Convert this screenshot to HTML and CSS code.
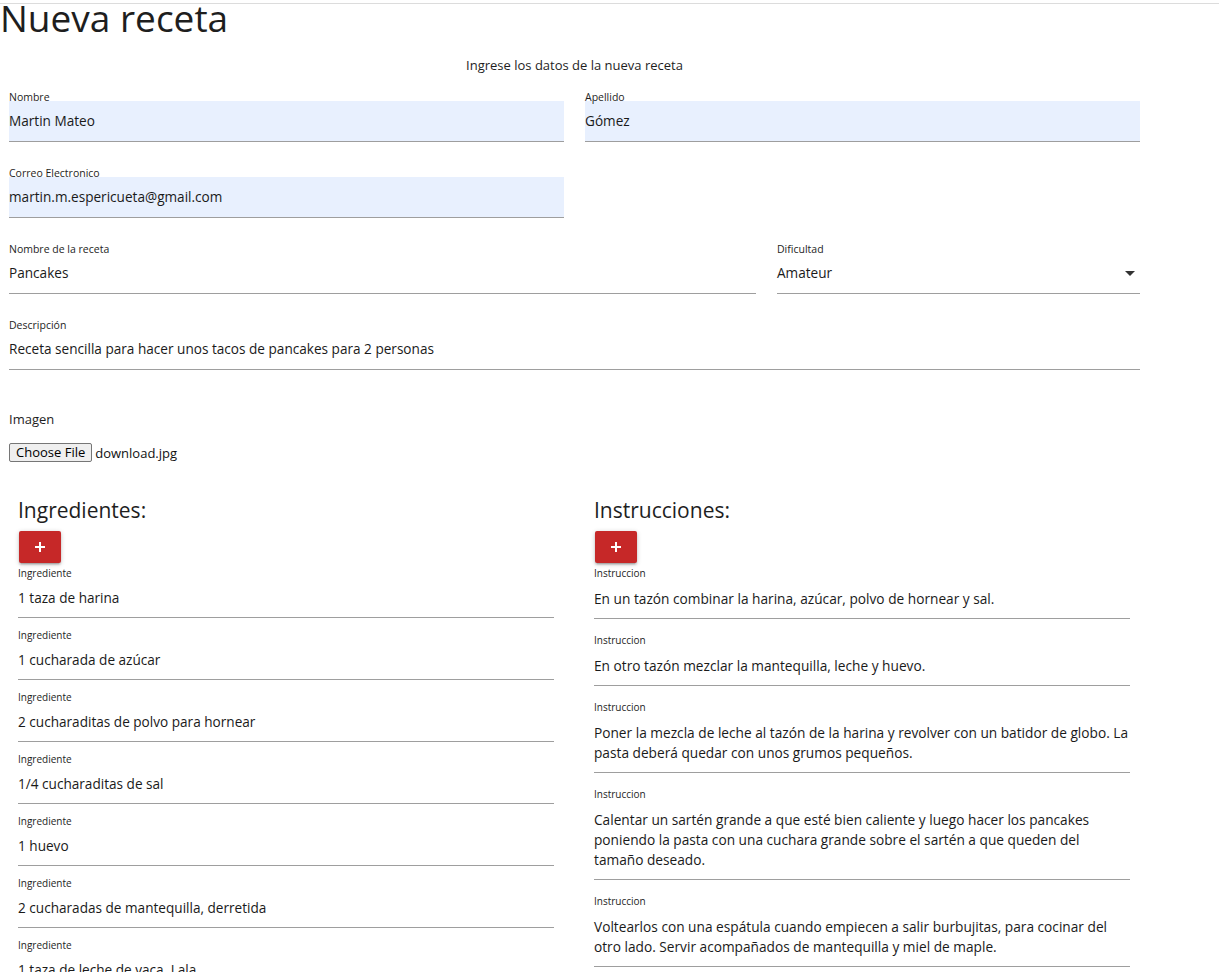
FILE: index.html
```html
<!DOCTYPE html>
<html lang="es">
<head>
<meta charset="utf-8">
<title>Nueva receta</title>
<link rel="stylesheet" href="styles.css">
</head>
<body>
<div class="page">
  <h1 class="title">Nueva receta</h1>
  <p class="subtitle">Ingrese los datos de la nueva receta</p>

  <form class="form">
    <div class="row two">
      <div class="field">
        <label class="flabel">Nombre</label>
        <div class="finput autofill">Martin Mateo</div>
      </div>
      <div class="field">
        <label class="flabel">Apellido</label>
        <div class="finput autofill">Gómez</div>
      </div>
    </div>

    <div class="row two">
      <div class="field">
        <label class="flabel">Correo Electronico</label>
        <div class="finput autofill">martin.m.espericueta@gmail.com</div>
      </div>
    </div>

    <div class="row split">
      <div class="field">
        <label class="flabel">Nombre de la receta</label>
        <div class="finput">Pancakes</div>
      </div>
      <div class="field">
        <label class="flabel">Dificultad</label>
        <div class="finput select">
          <span>Amateur</span>
          <svg class="caret" width="10" height="5" viewBox="0 0 10 5"><path d="M0 0h10L5 5z" fill="#333"/></svg>
        </div>
      </div>
    </div>

    <div class="row one">
      <div class="field">
        <label class="flabel">Descripción</label>
        <div class="finput">Receta sencilla para hacer unos tacos de pancakes para 2 personas</div>
      </div>
    </div>

    <div class="image-field">
      <div class="img-label">Imagen</div>
      <div class="file-row">
        <button type="button" class="file-btn">Choose File</button>
        <span class="file-name">download.jpg</span>
      </div>
    </div>
  </form>

  <div class="lists">
    <section class="list">
      <h2 class="list-title">Ingredientes:</h2>
      <button type="button" class="add-btn"><svg width="10" height="10" viewBox="0 0 10 10"><path d="M4 0h2v4h4v2H6v4H4V6H0V4h4z" fill="#fff"/></svg></button>
      <div class="item"><div class="ilabel">Ingrediente</div><div class="ivalue">1 taza de harina</div></div>
      <div class="item"><div class="ilabel">Ingrediente</div><div class="ivalue">1 cucharada de azúcar</div></div>
      <div class="item"><div class="ilabel">Ingrediente</div><div class="ivalue">2 cucharaditas de polvo para hornear</div></div>
      <div class="item"><div class="ilabel">Ingrediente</div><div class="ivalue">1/4 cucharaditas de sal</div></div>
      <div class="item"><div class="ilabel">Ingrediente</div><div class="ivalue">1 huevo</div></div>
      <div class="item"><div class="ilabel">Ingrediente</div><div class="ivalue">2 cucharadas de mantequilla, derretida</div></div>
      <div class="item"><div class="ilabel">Ingrediente</div><div class="ivalue">1 taza de leche de vaca, Lala</div></div>
    </section>
    <section class="list">
      <h2 class="list-title">Instrucciones:</h2>
      <button type="button" class="add-btn"><svg width="10" height="10" viewBox="0 0 10 10"><path d="M4 0h2v4h4v2H6v4H4V6H0V4h4z" fill="#fff"/></svg></button>
      <div class="step"><div class="ilabel">Instruccion</div><div class="svalue">En un tazón combinar la harina, azúcar, polvo de hornear y sal.</div></div>
      <div class="step"><div class="ilabel">Instruccion</div><div class="svalue">En otro tazón mezclar la mantequilla, leche y huevo.</div></div>
      <div class="step"><div class="ilabel">Instruccion</div><div class="svalue">Poner la mezcla de leche al tazón de la harina y revolver con un batidor de globo. La pasta deberá quedar con unos grumos pequeños.</div></div>
      <div class="step"><div class="ilabel">Instruccion</div><div class="svalue">Calentar un sartén grande a que esté bien caliente y luego hacer los pancakes poniendo la pasta con una cuchara grande sobre el sartén a que queden del tamaño deseado.</div></div>
      <div class="step"><div class="ilabel">Instruccion</div><div class="svalue">Voltearlos con una espátula cuando empiecen a salir burbujitas, para cocinar del otro lado. Servir acompañados de mantequilla y miel de maple.</div></div>
    </section>
  </div>
</div>
</body>
</html>
```

FILE: styles.css
```css
* { box-sizing: border-box; }

html, body {
  margin: 0;
  padding: 0;
  background: #fff;
}

body {
  font-family: "Open Sans", "Noto Sans", sans-serif;
  color: #1a1a1a;
}

.page {
  margin-top: 3px;
  border-top: 1px solid #dcdcdc;
}

.title {
  margin: 0;
  font-size: 37px;
  font-weight: 400;
  line-height: 28px;
  color: #1e1e1e;
}

.subtitle {
  margin: 23px 0 0 0;
  width: 1149px;
  text-align: center;
  font-size: 13px;
  line-height: 20px;
  color: #1e1e1e;
}

.form {
  padding: 16px 0 0 9px;
  width: 1140px;
}

.row {
  display: grid;
  column-gap: 21px;
  margin-bottom: 25px;
}
.row.two { grid-template-columns: 555px 555px; }
.row.split { grid-template-columns: 747px 363px; }
.row.one { grid-template-columns: 1131px; }

.field {
  display: flex;
  flex-direction: column;
}

.flabel {
  display: block;
  font-size: 10.5px;
  line-height: 12px;
  margin-bottom: -2px;
  color: #1e1e1e;
  position: relative;
  z-index: 1;
  white-space: nowrap;
}

.finput {
  height: 41px;
  border-bottom: 1px solid #9e9e9e;
  font-size: 13.6px;
  line-height: 40px;
  color: #1a1a1a;
  white-space: nowrap;
}

.finput.autofill {
  background: #e8f0fe;
}

.finput.select {
  display: flex;
  justify-content: space-between;
  align-items: center;
  padding-right: 5px;
}

.image-field {
  padding-top: 14px;
}

.img-label {
  font-size: 13px;
  line-height: 20px;
  color: #1e1e1e;
}

.file-row {
  margin-top: 14px;
  display: flex;
  align-items: center;
  gap: 3px;
}

.file-btn {
  height: 19px;
  padding: 0 6px;
  font-family: "Open Sans", "Noto Sans", sans-serif;
  font-size: 13px;
  line-height: 17px;
  color: #000;
  background: #efefef;
  border: 1px solid #767676;
  border-radius: 2px;
}

.file-name {
  font-size: 13px;
  color: #111;
}

.lists {
  margin-top: 34px;
  padding-left: 18px;
  display: grid;
  grid-template-columns: 536px 536px;
  column-gap: 40px;
}

.list {
  display: flex;
  flex-direction: column;
  align-items: flex-start;
}

.list-title {
  margin: 0;
  font-size: 21px;
  font-weight: 400;
  line-height: 28px;
  color: #1e1e1e;
}

.add-btn {
  margin: 7px 0 4px 1px;
  width: 42px;
  height: 32px;
  border: none;
  border-radius: 2px;
  background: #c62828;
  box-shadow: 0 2px 2px 0 rgba(0,0,0,0.14), 0 3px 1px -2px rgba(0,0,0,0.12), 0 1px 5px 0 rgba(0,0,0,0.2);
  display: flex;
  align-items: center;
  justify-content: center;
  padding: 0;
}

.item, .step {
  width: 100%;
}

.item { margin-bottom: 11px; }
.step { margin-bottom: 15px; }

.ilabel {
  font-size: 10px;
  line-height: 12px;
  color: #1e1e1e;
}

.ivalue {
  height: 39px;
  border-bottom: 1px solid #9e9e9e;
  font-size: 13.6px;
  line-height: 38px;
  color: #1a1a1a;
  white-space: nowrap;
}

.svalue {
  padding: 10px 0 9px;
  border-bottom: 1px solid #9e9e9e;
  font-size: 13.7px;
  line-height: 20px;
  color: #1a1a1a;
}
```
